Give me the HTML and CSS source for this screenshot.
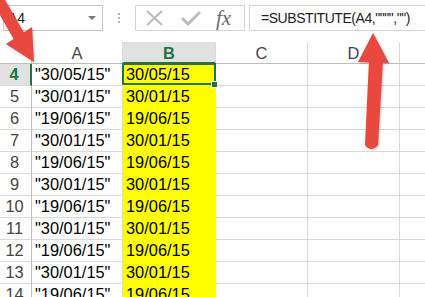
FILE: index.html
```html
<!DOCTYPE html>
<html lang="en">
<head>
  <meta charset="UTF-8" />
  <title>SUBSTITUTE</title>
  <link rel="stylesheet" href="styles.css">
</head>
<body>
  <div class="sheet">

    <!-- barra de fórmulas -->
    <div class="toolbar">
      <div class="namebox"><span>A4</span><span class="caret"></span></div>
      <div class="grip"><i></i><i></i><i></i></div>
      <div class="fxbtns">
        <svg width="20" height="16" viewBox="0 0 20 16">
          <path d="M2 1 L17 15 M17 1 L2 15" stroke="#bdbdbd" stroke-width="2.2" fill="none"/>
        </svg>
        <svg width="22" height="16" viewBox="0 0 22 16">
          <path d="M2 8 L8 14 L20 2" stroke="#bdbdbd" stroke-width="3" fill="none"/>
        </svg>
        <span class="fx">fx</span>
      </div>
      <div class="formula">=SUBSTITUTE(A4,"""","")</div>
    </div>

    <!-- hoja -->
    <div class="grid">
      <div class="cell corner"></div>
      <div class="cell head">A</div>
      <div class="cell head active">B</div>
      <div class="cell head">C</div>
      <div class="cell head">D</div>
      <div class="cell head last"></div>

      <div class="cell rownum active">4</div>
      <div class="cell">"30/05/15"</div>
      <div class="cell fill selected">30/05/15</div>
      <div class="cell"></div><div class="cell"></div><div class="cell last"></div>

      <div class="cell rownum">5</div>
      <div class="cell">"30/01/15"</div>
      <div class="cell fill">30/01/15</div>
      <div class="cell"></div><div class="cell"></div><div class="cell last"></div>

      <div class="cell rownum">6</div>
      <div class="cell">"19/06/15"</div>
      <div class="cell fill">19/06/15</div>
      <div class="cell"></div><div class="cell"></div><div class="cell last"></div>

      <div class="cell rownum">7</div>
      <div class="cell">"30/01/15"</div>
      <div class="cell fill">30/01/15</div>
      <div class="cell"></div><div class="cell"></div><div class="cell last"></div>

      <div class="cell rownum">8</div>
      <div class="cell">"19/06/15"</div>
      <div class="cell fill">19/06/15</div>
      <div class="cell"></div><div class="cell"></div><div class="cell last"></div>

      <div class="cell rownum">9</div>
      <div class="cell">"30/01/15"</div>
      <div class="cell fill">30/01/15</div>
      <div class="cell"></div><div class="cell"></div><div class="cell last"></div>

      <div class="cell rownum">10</div>
      <div class="cell">"19/06/15"</div>
      <div class="cell fill">19/06/15</div>
      <div class="cell"></div><div class="cell"></div><div class="cell last"></div>

      <div class="cell rownum">11</div>
      <div class="cell">"30/01/15"</div>
      <div class="cell fill">30/01/15</div>
      <div class="cell"></div><div class="cell"></div><div class="cell last"></div>

      <div class="cell rownum">12</div>
      <div class="cell">"19/06/15"</div>
      <div class="cell fill">19/06/15</div>
      <div class="cell"></div><div class="cell"></div><div class="cell last"></div>

      <div class="cell rownum">13</div>
      <div class="cell">"30/01/15"</div>
      <div class="cell fill">30/01/15</div>
      <div class="cell"></div><div class="cell"></div><div class="cell last"></div>

      <div class="cell rownum">14</div>
      <div class="cell">"19/06/15"</div>
      <div class="cell fill">19/06/15</div>
      <div class="cell"></div><div class="cell"></div><div class="cell last"></div>
    </div>

    <!-- flechas de anotación -->
    <svg class="arrows" width="425" height="297" viewBox="0 0 425 297">
      <g fill="#e8483d" stroke="none">
        <line x1="-3" y1="-2" x2="20" y2="38" stroke="#e8483d" stroke-width="12" stroke-linecap="round"/>
        <polygon points="6,44 32,27 34,62"/>
        <polygon points="373,33 358,62 389,63"/>
        <path d="M369 60 L383 60 L378 145 Q371 153 365 145 Z"/>
      </g>
    </svg>
  </div>
</body>
</html>
```

FILE: styles.css
```css
:root {
  --grid: #d9d9d9;
  --green: #217346;
  --head-bg: #e1e1e1;
  --arrow: #e8483d;
}

* {
  box-sizing: border-box;
}

body {
  margin: 0;
  background: #fff;
  font-family: 'Liberation Sans', Arial, sans-serif;
  color: #000;
  overflow: hidden;
}

.sheet {
  position: relative;
  width: 425px;
  height: 297px;
  overflow: hidden;
}

/* barra de fórmulas */
.toolbar {
  display: flex;
  height: 42px;
  padding-top: 5px;
}

.namebox {
  display: flex;
  align-items: center;
  justify-content: space-between;
  width: 100px;
  height: 26px;
  margin-left: 3px;
  padding: 0 6px 0 4px;
  border: 1px solid #c6c6c6;
  font-size: 14px;
  color: #222;
}

.caret {
  width: 0;
  height: 0;
  border-left: 4px solid transparent;
  border-right: 4px solid transparent;
  border-top: 4px solid #777;
}

.grip {
  width: 32px;
  height: 26px;
  display: flex;
  flex-direction: column;
  align-items: center;
  justify-content: center;
  gap: 2px;
}

.grip i {
  width: 2px;
  height: 2px;
  background: #b5b5b5;
}

.fxbtns {
  display: flex;
  align-items: center;
  width: 110px;
  height: 26px;
  padding-left: 9px;
  border: 1px solid #d4d4d4;
  gap: 15px;
}

.fx {
  font-family: 'Liberation Serif', serif;
  font-style: italic;
  font-size: 21px;
  color: #6a6a6a;
  margin-left: -1px;
  line-height: 1;
}

.formula {
  flex: 1;
  height: 26px;
  margin-left: 4px;
  padding-left: 11px;
  border: 1px solid #d4d4d4;
  border-right: none;
  font-size: 14px;
  letter-spacing: -0.45px;
  line-height: 25px;
  color: #222;
  white-space: nowrap;
}

/* hoja */
.grid {
  display: grid;
  grid-template-columns: 32px 91px 93px 92px 92px 1fr;
  grid-template-rows: 22px;
  grid-auto-rows: 22px;
}

.cell {
  border-right: 1px solid var(--grid);
  border-bottom: 1px solid var(--grid);
  font-size: 16.4px;
  line-height: 21px;
  padding-left: 3px;
  white-space: nowrap;
}

.cell.last {
  border-right: none;
}

.head,
.corner {
  text-align: center;
  padding-left: 0;
  color: #444;
  border-bottom-color: #bdbdbd;
  line-height: 22px;
}

.corner {
  border-right-color: #bdbdbd;
}

.head.active {
  background: var(--head-bg);
  color: var(--green);
  font-weight: bold;
  border-bottom: 2px solid var(--green);
}

.rownum {
  text-align: center;
  padding-left: 0;
  padding-right: 2px;
  color: #444;
  border-right-color: #bdbdbd;
}

.rownum.active {
  background: var(--head-bg);
  color: var(--green);
  font-weight: bold;
  border-right: 2px solid var(--green);
}

.fill {
  background: #ffff00;
  border-bottom-color: #ffff00;
  border-right-color: #ffff00;
}

.selected {
  position: relative;
}

.selected::after {
  content: "";
  position: absolute;
  left: -1px;
  top: -1px;
  right: -1px;
  bottom: 0;
  border: 2px solid var(--green);
}

.selected::before {
  content: "";
  position: absolute;
  right: -3px;
  bottom: -3px;
  width: 5px;
  height: 5px;
  background: var(--green);
  border: 1px solid #fff;
  z-index: 1;
}

/* flechas */
.arrows {
  position: absolute;
  left: 0;
  top: 0;
  filter: drop-shadow(1px 1px 1px rgba(0, 0, 0, 0.25));
}
```
